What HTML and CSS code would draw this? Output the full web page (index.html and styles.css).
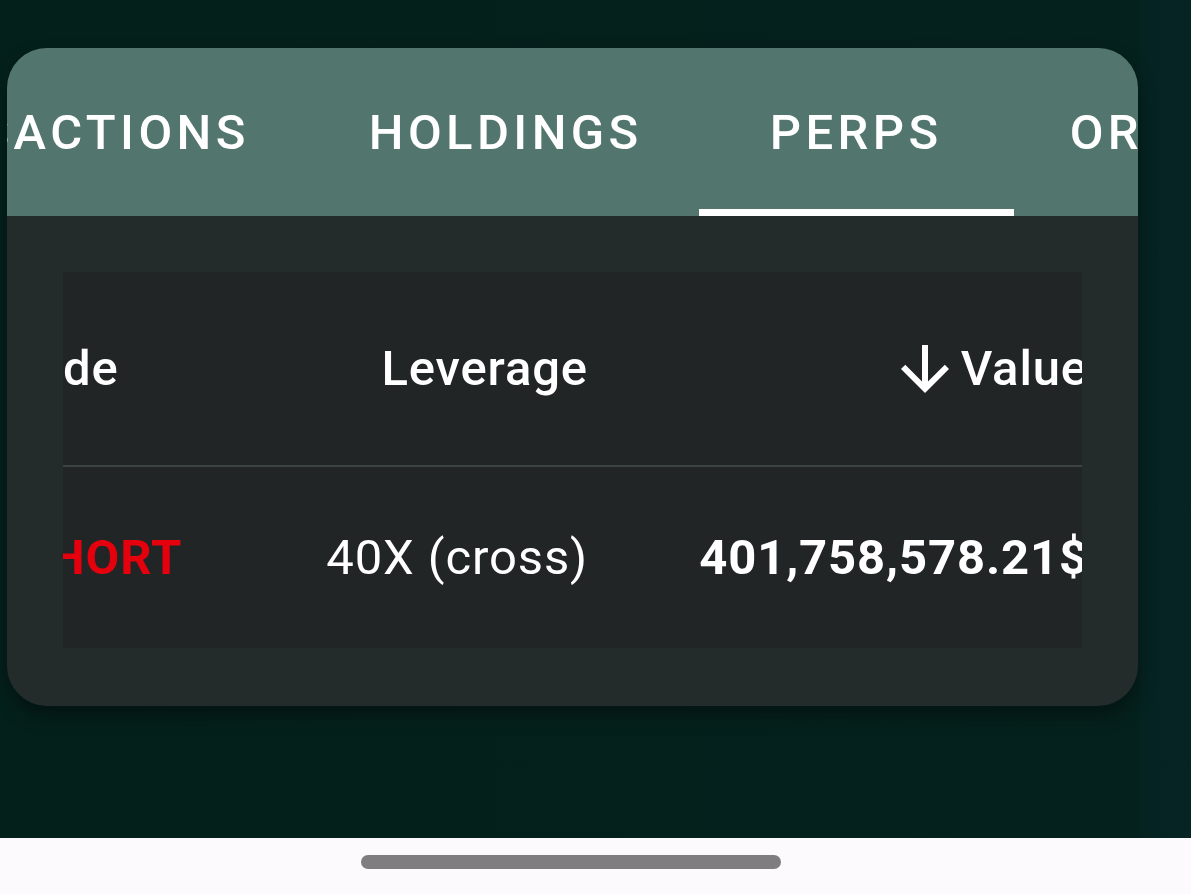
FILE: index.html
```html
<!DOCTYPE html>
<html lang="en">
<head>
<meta charset="utf-8">
<title>Perps</title>
<link rel="stylesheet" href="styles.css">
</head>
<body>
<div class="screen">
  <main class="content">
    <section class="card">
      <nav class="tabs">
        <div class="tab-track">
          <div class="tab first">TRANSACTIONS</div>
          <div class="tab">HOLDINGS</div>
          <div class="tab active">PERPS</div>
          <div class="tab">ORDERS</div>
        </div>
      </nav>
      <div class="card-body">
        <div class="table">
          <div class="table-track">
            <div class="row head">
              <div class="cell left">Side</div>
              <div class="cell right">Leverage</div>
              <div class="cell right sort">
                <svg class="arrow" viewBox="0 0 24 24" width="72" height="72" aria-hidden="true"><path d="M20 12l-1.41-1.41L13 16.17V4h-2v12.17l-5.58-5.59L4 12l8 8 8-8z" fill="#ffffff"/></svg>
                <span>Value</span>
              </div>
            </div>
            <div class="divider"></div>
            <div class="row data">
              <div class="cell left short">SHORT</div>
              <div class="cell right">40X (cross)</div>
              <div class="cell right value">401,758,578.21$</div>
            </div>
          </div>
        </div>
      </div>
    </section>
  </main>
  <footer class="navbar">
    <div class="handle"></div>
  </footer>
</div>
</body>
</html>
```

FILE: styles.css
```css
html, body {
  margin: 0;
  padding: 0;
}
body {
  width: 1191px;
  height: 894px;
  overflow: hidden;
  font-family: Roboto, "Noto Sans", "Liberation Sans", sans-serif;
  color: #ffffff;
  background: #05201b;
}
.screen {
  display: flex;
  flex-direction: column;
  height: 894px;
}
.content {
  height: 838px;
  padding: 48px 0 0 7px;
  box-sizing: border-box;
  background: linear-gradient(to right, #04201b 0, #05211d 1138px, #052321 1142px, #052423 100%);
}
.card {
  width: 1131px;
  height: 658px;
  border-radius: 40px;
  overflow: hidden;
  background: #232b2b;
  display: flex;
  flex-direction: column;
  box-shadow: 0 10px 18px rgba(0, 0, 0, 0.35);
}
.tabs {
  height: 168px;
  flex: none;
  background: #52766e;
  overflow: hidden;
}
.tab-track {
  display: flex;
  height: 100%;
  margin-left: -222px;
}
.tab {
  flex: none;
  min-width: 315px;
  box-sizing: border-box;
  padding: 0 56px;
  display: flex;
  align-items: center;
  justify-content: center;
  font-size: 49px;
  font-weight: 500;
  letter-spacing: 4.4px;
  position: relative;
  white-space: nowrap;
}
.tab.first {
  padding-right: 63px;
  margin-left: -7px;
}
.tab.active::after {
  content: "";
  position: absolute;
  left: 0;
  right: 0;
  bottom: 0;
  height: 7px;
  background: #ffffff;
}
.card-body {
  flex: 1;
  padding: 56px 56px 58px 56px;
}
.table {
  height: 376px;
  background: #212526;
  overflow: hidden;
}
.table-track {
  margin-left: -100px;
  width: 1181px;
}
.row {
  display: grid;
  grid-template-columns: 250px 319px 500px;
  padding: 0 56px;
  align-items: center;
  letter-spacing: 0.875px;
}
.row.head {
  height: 193px;
  font-size: 49px;
  font-weight: 500;
}
.row.data {
  height: 181px;
  font-size: 49px;
  font-weight: 400;
}
.divider {
  height: 2px;
  background: #3b4343;
}
.cell {
  white-space: nowrap;
}
.cell.left {
  text-align: left;
}
.cell.right {
  text-align: right;
}
.sort {
  display: flex;
  align-items: center;
  justify-content: flex-end;
}
.arrow {
  flex: none;
  display: block;
}
.short {
  color: #e5000d;
  font-weight: 700;
}
.value {
  font-weight: 700;
}
.navbar {
  height: 56px;
  background: #fcfafd;
  padding: 17px 0 0 361px;
  box-sizing: border-box;
}
.handle {
  width: 420px;
  height: 14px;
  border-radius: 7px;
  background: #7f7d80;
}
```
